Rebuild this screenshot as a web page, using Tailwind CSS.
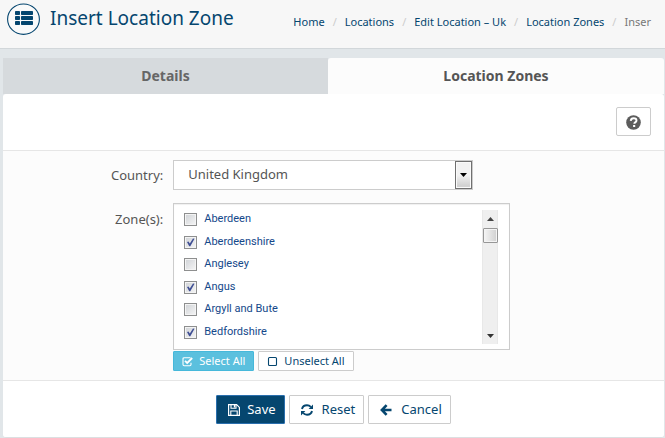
<!DOCTYPE html>
<html lang="en">
<head>
<meta charset="utf-8">
<title>Insert Location Zone</title>
<script src="https://cdn.jsdelivr.net/npm/@tailwindcss/browser@4"></script>
</head>
<body class="min-h-screen overflow-x-hidden bg-[#e1e6e9] font-['Noto_Sans','Open_Sans',sans-serif] text-[13px] text-[#555]">

<header class="flex h-[49px] items-start justify-between border-b border-[#d2d7da] bg-[#f7f7f7] pr-[14px] pl-[7px] whitespace-nowrap">
  <div class="flex items-start gap-[10px] pt-[3px]">
    <svg class="h-[33px] w-[33px]" viewBox="0 0 33 33" aria-hidden="true">
      <ellipse cx="16.5" cy="16.2" rx="15.9" ry="15.2" fill="#fafafa" stroke="#05466f" stroke-width="1.1"/>
      <g fill="#05466f">
        <rect x="8" y="8" width="5" height="4" rx=".7"/><rect x="14" y="8" width="12" height="4" rx=".7"/>
        <rect x="8" y="13" width="5" height="4" rx=".7"/><rect x="14" y="13" width="12" height="4" rx=".7"/>
        <rect x="8" y="18" width="5" height="4" rx=".7"/><rect x="14" y="18" width="12" height="4" rx=".7"/>
      </g>
    </svg>
    <h1 class="text-[19px] leading-[30px] text-[#05466f]">Insert Location Zone</h1>
  </div>
  <nav aria-label="Breadcrumb" class="pt-[14px]">
    <ol class="flex gap-2 text-[11px] leading-4 text-[#05466f]">
      <li><a href="#">Home</a></li><li class="text-[#ccc]" aria-hidden="true">/</li>
      <li><a href="#">Locations</a></li><li class="text-[#ccc]" aria-hidden="true">/</li>
      <li><a href="#">Edit Location – Uk</a></li><li class="text-[#ccc]" aria-hidden="true">/</li>
      <li><a href="#">Location Zones</a></li><li class="text-[#ccc]" aria-hidden="true">/</li>
      <li class="text-[#777]">Inser</li>
    </ol>
  </nav>
</header>

<main class="mt-[9px] mr-px ml-[3px]">
  <div class="flex text-center text-[14px] leading-9 font-bold" role="tablist">
    <button type="button" role="tab" aria-selected="false" class="h-9 flex-[325] bg-[#d6dadd] text-[#666]">Details</button>
    <button type="button" role="tab" aria-selected="true" class="h-9 flex-[336] rounded-t-[3px] bg-[#fcfcfc]">Location Zones</button>
  </div>

  <form class="rounded-[3px] border-b border-[#dcdfe1] bg-white">
    <div class="flex justify-end border-b border-[#e6e6e6] pt-[13px] pr-[13px] pb-[14px]">
      <button type="button" aria-label="Help" class="flex h-[29px] w-[35px] items-center justify-center rounded-[2px] border border-[#ccc] bg-white">
        <svg class="mt-px h-[15px] w-[15px]" viewBox="0 0 15 15" aria-hidden="true">
          <circle cx="7.5" cy="7.5" r="7.3" fill="#5c5c5c"/>
          <path d="M4.7 5.8C4.9 4 6 3.2 7.6 3.2c1.7 0 2.9.9 2.9 2.3 0 1.8-2.2 1.9-2.2 3.2" fill="none" stroke="#fff" stroke-width="1.9"/>
          <rect x="7.1" y="10" width="2.1" height="2" fill="#fff"/>
        </svg>
      </button>
    </div>

    <div class="flex flex-col gap-[13px] border-b border-[#e6e6e6] bg-[#fcfcfc] pt-[9px] pb-[9px]">
      <div class="flex">
        <label for="country" class="w-1/4 pr-[5px] text-right leading-[30px]">Country:</label>
        <div class="relative ml-[5px] w-[300px]">
          <select id="country" class="h-[30px] w-full appearance-none border border-[#ccc] bg-white pr-5 pl-[14px]">
            <option>United Kingdom</option>
          </select>
          <span class="pointer-events-none absolute top-px right-px bottom-px flex w-[17px] items-center justify-center border border-[#707070] bg-linear-to-b from-[#f2f2f2] from-50% to-[#d2d2d2] to-90% shadow-[inset_0_0_0_1px_#fafafa]">
            <svg class="h-1 w-[7px]" viewBox="0 0 7 4" aria-hidden="true"><path d="M0 0h7L3.500 4z" fill="#000"/></svg>
          </span>
        </div>
      </div>

      <div class="flex">
        <div id="zones" class="w-1/4 pr-[5px] text-right leading-[32px]">Zone(s):</div>
        <div class="ml-[5px] w-[337px]">
          <div role="group" aria-labelledby="zones" class="flex h-[147px] items-start justify-between border border-[#ccc] bg-white pt-1 pr-[11px] pl-[10px] shadow-[inset_0_1px_1px_#f0f0f0]">
            <ul class="grid h-[135px] auto-rows-fr font-[Roboto,sans-serif] text-[11px] leading-4 text-[#14488a]">
              <li><label class="flex h-full items-center gap-[7px]"><span class="relative mt-px h-[13px] w-[13px]"><input type="checkbox" class="block h-[13px] w-[13px] appearance-none border border-[#8e8f8f] bg-linear-to-br from-[#cfd2d6] to-[#f6f6f6] shadow-[inset_0_0_0_1px_#f4f4f4]"></span>Aberdeen</label></li>
              <li><label class="flex h-full items-center gap-[7px]"><span class="relative mt-px h-[13px] w-[13px]"><input type="checkbox" checked class="peer block h-[13px] w-[13px] appearance-none border border-[#8e8f8f] bg-linear-to-br from-[#cfd2d6] to-[#f6f6f6] shadow-[inset_0_0_0_1px_#f4f4f4]"><svg class="pointer-events-none absolute inset-0 hidden peer-checked:block" viewBox="0 0 13 13" aria-hidden="true"><path d="M3 6l1.500-.5 1.300 2L9 2.500l1.500.2L6.300 10.300H5.200z" fill="#3f4f94"/></svg></span>Aberdeenshire</label></li>
              <li><label class="flex h-full items-center gap-[7px]"><span class="relative mt-px h-[13px] w-[13px]"><input type="checkbox" class="block h-[13px] w-[13px] appearance-none border border-[#8e8f8f] bg-linear-to-br from-[#cfd2d6] to-[#f6f6f6] shadow-[inset_0_0_0_1px_#f4f4f4]"></span>Anglesey</label></li>
              <li><label class="flex h-full items-center gap-[7px]"><span class="relative mt-px h-[13px] w-[13px]"><input type="checkbox" checked class="peer block h-[13px] w-[13px] appearance-none border border-[#8e8f8f] bg-linear-to-br from-[#cfd2d6] to-[#f6f6f6] shadow-[inset_0_0_0_1px_#f4f4f4]"><svg class="pointer-events-none absolute inset-0 hidden peer-checked:block" viewBox="0 0 13 13" aria-hidden="true"><path d="M3 6l1.500-.5 1.300 2L9 2.500l1.500.2L6.300 10.300H5.200z" fill="#3f4f94"/></svg></span>Angus</label></li>
              <li><label class="flex h-full items-center gap-[7px]"><span class="relative mt-px h-[13px] w-[13px]"><input type="checkbox" class="block h-[13px] w-[13px] appearance-none border border-[#8e8f8f] bg-linear-to-br from-[#cfd2d6] to-[#f6f6f6] shadow-[inset_0_0_0_1px_#f4f4f4]"></span>Argyll and Bute</label></li>
              <li><label class="flex h-full items-center gap-[7px]"><span class="relative mt-px h-[13px] w-[13px]"><input type="checkbox" checked class="peer block h-[13px] w-[13px] appearance-none border border-[#8e8f8f] bg-linear-to-br from-[#cfd2d6] to-[#f6f6f6] shadow-[inset_0_0_0_1px_#f4f4f4]"><svg class="pointer-events-none absolute inset-0 hidden peer-checked:block" viewBox="0 0 13 13" aria-hidden="true"><path d="M3 6l1.500-.5 1.300 2L9 2.500l1.500.2L6.300 10.300H5.200z" fill="#3f4f94"/></svg></span>Bedfordshire</label></li>
            </ul>
            <div class="mt-[2px] flex h-[134px] w-4 flex-col items-center justify-between border-x border-[#e8e8e8] bg-[#efefef] pt-[7px] pb-[6px]" aria-hidden="true">
              <div class="flex flex-col items-center gap-[7px]">
                <svg class="h-1 w-[7px]" viewBox="0 0 7 4"><path d="M0 4h7L3.500 0z" fill="#444"/></svg>
                <div class="h-[15px] w-[15px] rounded-[1px] border border-[#979797] bg-linear-to-r from-[#f5f5f5] to-[#d0d0d0] shadow-[inset_0_0_0_1px_#f4f4f4]"></div>
              </div>
              <svg class="h-1 w-[7px]" viewBox="0 0 7 4"><path d="M0 0h7L3.500 4z" fill="#333"/></svg>
            </div>
          </div>
          <div class="mt-px flex gap-1 text-[11px] leading-[18px]">
            <button type="button" class="flex h-5 items-center gap-1 rounded-[1px] border border-[#46b8da] bg-[#5bc0de] px-2 text-white">
              <svg class="mr-[2px] h-[11px] w-[11px]" viewBox="0 0 11 11" fill="none" stroke="#fff" aria-hidden="true"><path d="M8.500 1.700H2.200Q1 1.700 1 2.900v5.600q0 1.200 1.200 1.200h5.600q1.200 0 1.200-1.200V6.800" stroke-width="1.100"/><path d="M3 4.800l2.200 2.200 5-5" stroke-width="1.800"/></svg>
              Select All
            </button>
            <button type="button" class="flex h-5 items-center gap-1 rounded-[1px] border border-[#ccc] bg-white px-2 text-[#05466f]">
              <svg class="mr-[2px] h-[11px] w-[11px]" viewBox="0 0 11 11" aria-hidden="true"><rect x="1.500" y="1.500" width="8" height="8" rx="1" fill="none" stroke="#05466f" stroke-width="1.100"/></svg>
              Unselect All
            </button>
          </div>
        </div>
      </div>
    </div>

    <div class="flex justify-center gap-1 pt-[14px] pb-[13px] text-[#05466f]">
      <button type="submit" class="flex h-[29px] items-center gap-1 rounded-[1px] border border-[#2a6fae] bg-[#05466f] px-2 text-white">
        <svg class="mx-[3px] h-3 w-3" viewBox="0 0 12 12" fill="none" stroke="#fff" aria-hidden="true"><path d="M.6.600h8L11.400 3.400v8H.6z" stroke-width="1.200"/><path d="M3 .8v3.400h5V.8M2.800 11.400V7h6.400v4.400" stroke-width="1.100"/><path d="M6.500 1v2.500" stroke-width="1.300"/></svg>
        Save
      </button>
      <button type="reset" class="flex h-[29px] items-center gap-[6px] rounded-[1px] border border-[#ccc] bg-white px-2">
        <svg class="mx-[3px] h-3 w-3" viewBox="0 0 12 12" aria-hidden="true"><path d="M1 5C1.500 2.700 3.600 1.300 6 1.300c1.500 0 2.800.5 3.800 1.500M11 7c-.5 2.300-2.600 3.700-5 3.700-1.500 0-2.800-.5-3.800-1.500" fill="none" stroke="#05466f" stroke-width="1.900"/><path d="M12 .6V5H7.600zM0 11.400V7h4.400z" fill="#05466f"/></svg>
        Reset
      </button>
      <button type="button" class="flex h-[29px] items-center gap-[6px] rounded-[1px] border border-[#ccc] bg-white px-2">
        <svg class="mx-[3px] h-3 w-3" viewBox="0 0 12 12" fill="none" stroke="#05466f" stroke-width="2.600" aria-hidden="true"><path d="M6.600 1.200L1.900 6l4.700 4.800M2.200 6H11.500"/></svg>
        Cancel
      </button>
    </div>
  </form>
</main>
</body>
</html>
